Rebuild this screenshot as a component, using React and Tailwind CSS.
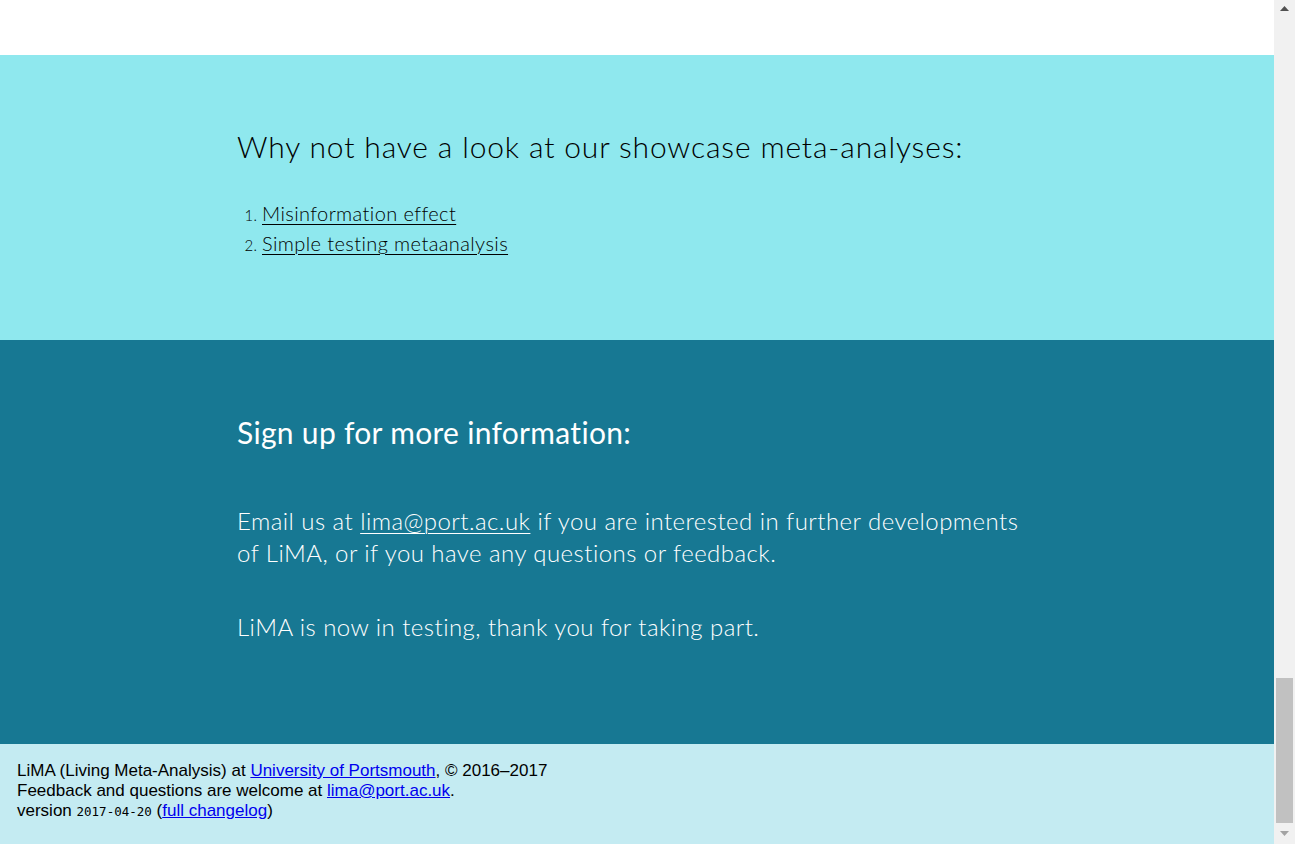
const sans = { fontFamily: 'Lato, "Noto Sans", sans-serif' };

const App = () => {
  return (
    <div className="flex h-screen w-full overflow-hidden bg-white">
      <div className="flex flex-1 flex-col">
        <div className="h-[55px] bg-white" />

        <section className="h-[285px] bg-[#8fe8ee] text-black" style={sans}>
          <div className="mx-auto w-[800px] pt-[73px]">
            <h2 className="text-[30px] font-light leading-[36px] tracking-[0.85px]">
              Why not have a look at our showcase meta-analyses:
            </h2>
            <ol className="mt-[34px] list-decimal pl-[25px] text-[20px] font-light leading-[30px] tracking-[0.4px] marker:text-[15px]">
              <li>
                <a href="#" className="underline decoration-1 underline-offset-[3px]">
                  Misinformation effect
                </a>
              </li>
              <li>
                <a href="#" className="underline decoration-1 underline-offset-[3px]">
                  Simple testing metaanalysis
                </a>
              </li>
            </ol>
          </div>
        </section>

        <section className="h-[404px] bg-[#177893] text-white" style={sans}>
          <div className="mx-auto w-[800px] pt-[74px]">
            <h2 className="text-[30px] font-normal leading-[36px] tracking-[0.3px]">
              Sign up for more information:
            </h2>
            <p className="mt-[55px] text-[24px] font-light leading-[32px] tracking-[0.45px]">
              Email us at <a href="#" className="underline decoration-1 underline-offset-[3px]">lima@port.ac.uk</a> if
              you are interested in further developments of LiMA, or if you have any questions or feedback.
            </p>
            <p className="mt-[42px] text-[24px] font-light leading-[32px] tracking-[0.45px]">
              LiMA is now in testing, thank you for taking part.
            </p>
          </div>
        </section>

        <footer
          className="h-[100px] bg-[#c4ebf2] px-[17px] pt-[17px] text-[17px] leading-[20px] text-black"
          style={{ fontFamily: '"Liberation Sans", Arial, sans-serif' }}
        >
          <div>
            LiMA (Living Meta-Analysis) at{' '}
            <a href="#" className="text-[#0000ee] underline">
              University of Portsmouth
            </a>
            , © 2016–2017
          </div>
          <div>
            Feedback and questions are welcome at{' '}
            <a href="#" className="text-[#0000ee] underline">
              lima@port.ac.uk
            </a>
            .
          </div>
          <div>
            version{' '}
            <code className="text-[12.5px]" style={{ fontFamily: '"DejaVu Sans Mono", monospace' }}>
              2017-04-20
            </code>{' '}
            (
            <a href="#" className="text-[#0000ee] underline">
              full changelog
            </a>
            )
          </div>
        </footer>
      </div>

      {/* fake scrollbar, page is scrolled to the bottom */}
      <div className="flex w-[21px] flex-col items-center bg-[#f1f1f1]">
        <div className="flex h-[17px] items-center justify-center">
          <svg width="9" height="5" viewBox="0 0 9 5">
            <path d="M4.5 0 L9 5 L0 5 Z" fill="#505050" />
          </svg>
        </div>
        <div className="flex-1" />
        <div className="h-[145px] w-[17px] bg-[#c1c1c1]" />
        <div className="flex h-[21px] items-center justify-center">
          <svg width="9" height="5" viewBox="0 0 9 5">
            <path d="M0 0 L9 0 L4.5 5 Z" fill="#a3a3a3" />
          </svg>
        </div>
      </div>
    </div>
  );
};

export default App;
